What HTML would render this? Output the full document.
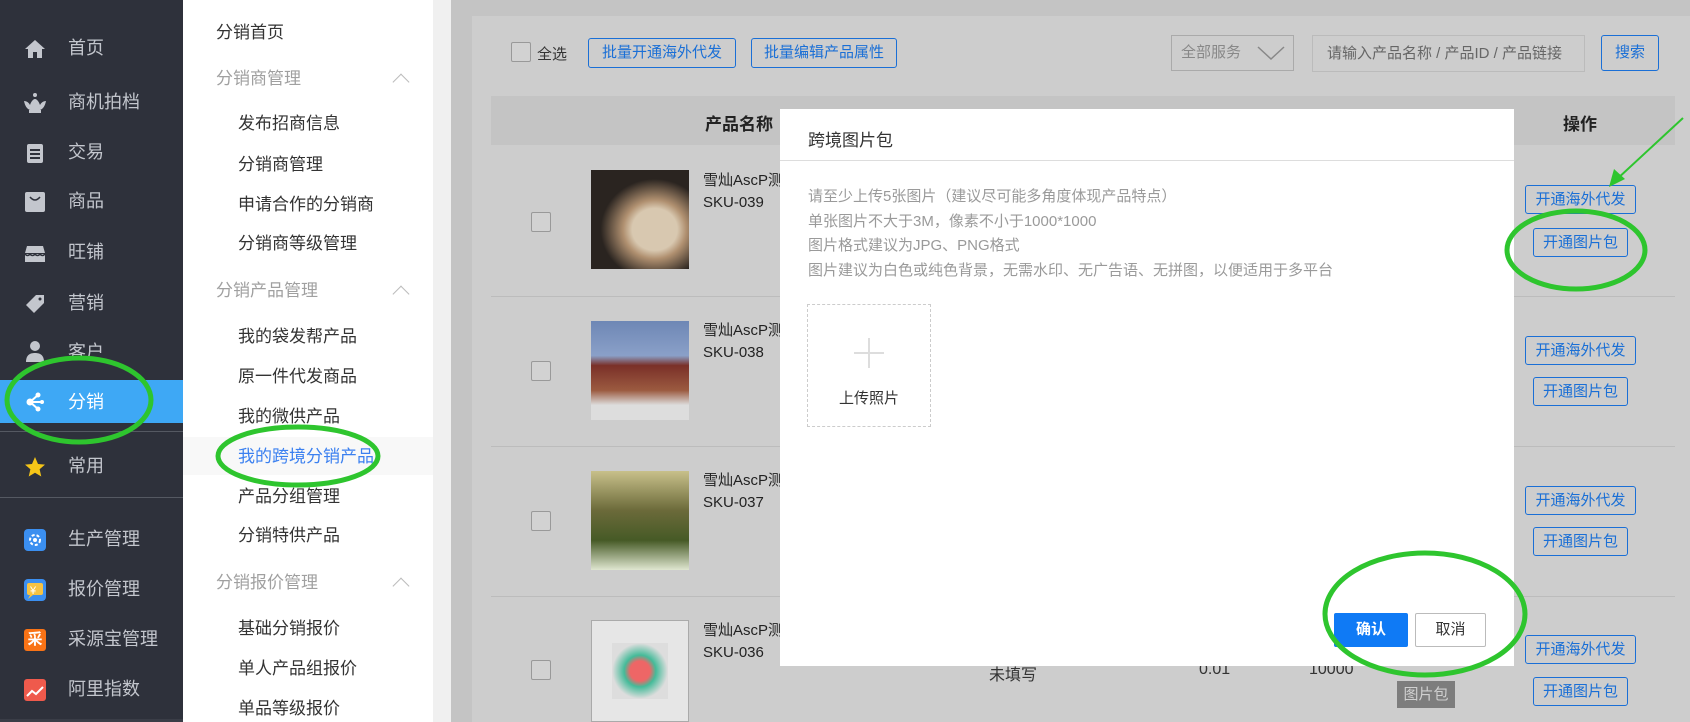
<!DOCTYPE html>
<html><head><meta charset="utf-8"><style>
*{margin:0;padding:0;box-sizing:border-box}
body{width:1690px;height:722px;overflow:hidden;position:relative;background:#c4c4c4;font-family:"Liberation Sans","Noto Sans CJK SC",sans-serif}
.a{position:absolute;white-space:nowrap}
#sb{position:absolute;left:0;top:0;width:183px;height:722px;background:#2e313b}
.si{position:absolute;left:68px;font-size:18px;color:#c3c6cd;line-height:20px}
.ic{position:absolute;left:24px;width:22px;height:22px}
#nav{position:absolute;left:183px;top:0;width:250px;height:722px;background:#fff}
.n{position:absolute;font-size:17px;color:#333;line-height:20px}
.g{color:#a0a0a0;left:33px}
.s{left:55px}
.chev{position:absolute;left:212px;width:12px;height:12px;border-left:1px solid #bbb;border-top:1px solid #bbb;transform:rotate(45deg)}
.bb{position:absolute;border:1px solid #1a6fd6;border-radius:3px;color:#1a6fd6;font-size:15px;text-align:center;background:transparent;white-space:nowrap}
.cb{position:absolute;width:20px;height:20px;border:1px solid #999;border-radius:2px;background:#d2d2d2}
.sep{position:absolute;left:491px;width:1184px;height:1px;background:#bcbcbc}
.img{position:absolute;left:591px;width:98px;height:99px}
.t{position:absolute;left:703px;font-size:15px;color:#222;line-height:22px;width:77px;overflow:hidden;white-space:nowrap}
#m{position:absolute;left:780px;top:109px;width:734px;height:557px;background:#fff}
.ml{position:absolute;left:28px;font-size:15px;color:#9a9a9a;white-space:nowrap}
.b1{width:111px;height:29px;line-height:27px;left:1525px}
.b2{width:95px;height:29px;line-height:27px;left:1533px}
</style></head><body>
<div id="sb">
 <div class="ic" style="top:38px"><svg width="22" height="22"><path d="M11 2L1 11h3v9h5v-6h4v6h5v-9h3z" fill="#c3c6cd"/></svg></div>
 <div class="si" style="top:38px">首页</div>
 <div class="ic" style="top:92px;left:22px"><svg width="26" height="22"><circle cx="13" cy="3" r="2" fill="#c3c6cd"/><path d="M2 9c3 0 5 2 6 4 1-3 3-6 5-6s4 3 5 6c1-2 3-4 6-4-1 5-3 8-6 9H8C5 17 3 14 2 9z" fill="#c3c6cd"/><rect x="7" y="18" width="12" height="3" fill="#c3c6cd"/></svg></div>
 <div class="si" style="top:92px">商机拍档</div>
 <div class="ic" style="top:142px"><svg width="22" height="22"><rect x="3" y="2" width="16" height="19" rx="2" fill="#c3c6cd"/><rect x="6" y="7" width="10" height="2" fill="#2e313b"/><rect x="6" y="11" width="10" height="2" fill="#2e313b"/><rect x="6" y="15" width="10" height="2" fill="#2e313b"/></svg></div>
 <div class="si" style="top:142px">交易</div>
 <div class="ic" style="top:191px"><svg width="22" height="22"><rect x="1" y="1" width="20" height="20" rx="2" fill="#c3c6cd"/><path d="M6 6q5 6 10 0" stroke="#2e313b" stroke-width="1.5" fill="none"/></svg></div>
 <div class="si" style="top:191px">商品</div>
 <div class="ic" style="top:242px"><svg width="22" height="22"><path d="M3 4h16l2 7H1z" fill="#c3c6cd"/><path d="M1 12h20v8H1z" fill="#c3c6cd"/><path d="M1 12q2.5 3 5 0q2.5 3 5 0q2.5 3 5 0q2.5 3 5 0" stroke="#2e313b" stroke-width="1.5" fill="none"/></svg></div>
 <div class="si" style="top:242px">旺铺</div>
 <div class="ic" style="top:293px"><svg width="22" height="22"><path d="M12 2h8v8L10 20 2 12z" fill="#c3c6cd"/><circle cx="16" cy="6" r="1.5" fill="#2e313b"/></svg></div>
 <div class="si" style="top:293px">营销</div>
 <div class="ic" style="top:340px"><svg width="22" height="22"><circle cx="11" cy="6" r="5" fill="#c3c6cd"/><path d="M2 22c0-7 4-9 9-9s9 2 9 9z" fill="#c3c6cd"/></svg></div>
 <div class="si" style="top:342px">客户</div>
 <div style="position:absolute;left:0;top:380px;width:183px;height:43px;background:#3ea8f5"></div>
 <div class="ic" style="top:391px"><svg width="22" height="22"><circle cx="6" cy="11" r="3.5" fill="#fff"/><circle cx="14" cy="4" r="2.5" fill="#fff"/><circle cx="14" cy="18" r="2.5" fill="#fff"/><circle cx="18" cy="11" r="2" fill="#fff"/><path d="M6 11L14 4M6 11L14 18M6 11h12" stroke="#fff" stroke-width="2"/></svg></div>
 <div class="si" style="top:392px;color:#fff">分销</div>
 <div style="position:absolute;left:0;top:431px;width:183px;height:1px;background:#555962"></div>
 <div class="ic" style="top:456px"><svg width="22" height="22"><path d="M11 1l3 7 7 .6-5.4 4.7 1.7 7.2L11 16.7 4.7 20.5l1.7-7.2L1 8.6 8 8z" fill="#f5c518"/></svg></div>
 <div class="si" style="top:456px">常用</div>
 <div style="position:absolute;left:0;top:497px;width:183px;height:1px;background:#555962"></div>
 <div class="ic" style="top:529px;border-radius:4px;background:#3b8ff0"><svg width="22" height="22"><circle cx="11" cy="11" r="5" stroke="#fff" stroke-width="2" fill="none" stroke-dasharray="3 2"/><circle cx="11" cy="11" r="2" fill="#fff"/></svg></div>
 <div class="si" style="top:529px">生产管理</div>
 <div class="ic" style="top:579px;border-radius:4px;background:#3b8ff0"><svg width="22" height="22"><rect x="3" y="4" width="16" height="12" rx="2" fill="#f6c343"/><path d="M6 16l-2 4 5-4z" fill="#f6c343"/><text x="6" y="15" font-size="11" fill="#fff" font-family="Liberation Sans">¥</text></svg></div>
 <div class="si" style="top:579px">报价管理</div>
 <div class="ic" style="top:629px;border-radius:3px;background:#f97316;color:#fff;font-size:15px;text-align:center;line-height:22px;font-weight:bold">采</div>
 <div class="si" style="top:629px">采源宝管理</div>
 <div class="ic" style="top:679px;border-radius:3px;background:#ef5a4c"><svg width="22" height="22"><path d="M3 17l5-5 4 3 7-7" stroke="#fff" stroke-width="2" fill="none"/></svg></div>
 <div class="si" style="top:679px">阿里指数</div>
 <div style="position:absolute;left:0;top:719px;width:183px;height:3px;background:#3a3d47"></div>
</div>
<div id="nav">
 <div class="n" style="left:33px;top:23px">分销首页</div>
 <div class="n g" style="top:69px">分销商管理</div><div class="chev" style="top:76px"></div>
 <div class="n s" style="top:114px">发布招商信息</div>
 <div class="n s" style="top:155px">分销商管理</div>
 <div class="n s" style="top:195px">申请合作的分销商</div>
 <div class="n s" style="top:234px">分销商等级管理</div>
 <div class="n g" style="top:281px">分销产品管理</div><div class="chev" style="top:288px"></div>
 <div class="n s" style="top:327px">我的袋发帮产品</div>
 <div class="n s" style="top:367px">原一件代发商品</div>
 <div class="n s" style="top:407px">我的微供产品</div>
 <div style="position:absolute;left:0;top:437px;width:250px;height:38px;background:#f8f8f8"></div>
 <div class="n s" style="top:447px;color:#3b80f0">我的跨境分销产品</div>
 <div class="n s" style="top:487px">产品分组管理</div>
 <div class="n s" style="top:526px">分销特供产品</div>
 <div class="n g" style="top:573px">分销报价管理</div><div class="chev" style="top:580px"></div>
 <div class="n s" style="top:619px">基础分销报价</div>
 <div class="n s" style="top:659px">单人产品组报价</div>
 <div class="n s" style="top:699px">单品等级报价</div>
</div>
<div style="position:absolute;left:433px;top:0;width:18px;height:722px;background:#f0f0f0"></div>
<div style="position:absolute;left:472px;top:16px;width:1218px;height:706px;background:#cdcdcd"></div>
<div class="cb" style="left:511px;top:42px"></div>
<div class="a" style="left:537px;top:43px;font-size:15px;color:#333">全选</div>
<div class="bb" style="left:588px;top:38px;width:148px;height:30px;line-height:28px">批量开通海外代发</div>
<div class="bb" style="left:751px;top:38px;width:146px;height:30px;line-height:28px">批量编辑产品属性</div>
<div class="a" style="left:1171px;top:35px;width:123px;height:36px;border:1px solid #aaa;font-size:15px;color:#888;line-height:34px;padding-left:9px">全部服务</div>
<svg class="a" style="left:1256px;top:44px" width="30" height="18"><path d="M2 3l13 12L28 3" stroke="#888" stroke-width="1.5" fill="none"/></svg>
<div class="a" style="left:1312px;top:35px;width:273px;height:37px;border:1px solid #bbb;font-size:15px;color:#666;line-height:35px;padding-left:14px">请输入产品名称 / 产品ID / 产品链接</div>
<div class="bb" style="left:1601px;top:35px;width:58px;height:36px;line-height:34px">搜索</div>
<div class="a" style="left:491px;top:96px;width:1184px;height:49px;background:#c4c4c4"></div>
<div class="a" style="left:705px;top:110px;font-size:17px;font-weight:bold;color:#222">产品名称</div>
<div class="a" style="left:1563px;top:110px;font-size:17px;font-weight:bold;color:#222">操作</div>
<div class="sep" style="top:296px"></div>
<div class="sep" style="top:446px"></div>
<div class="sep" style="top:596px"></div>
<div class="cb" style="left:531px;top:212px"></div>
<div class="cb" style="left:531px;top:361px"></div>
<div class="cb" style="left:531px;top:511px"></div>
<div class="cb" style="left:531px;top:660px"></div>
<div class="img" style="top:170px;background:radial-gradient(ellipse at 65% 60%,#d8c8b0 0 25%,#b09070 35%,#2a2420 60%)"></div>
<div class="img" style="top:321px;background:linear-gradient(#6e87b5 0,#8aa0c8 35%,#7a3028 45%,#9b5a40 70%,#ddd 85%)"></div>
<div class="img" style="top:471px;background:linear-gradient(#c8c08a 0,#6b6a3a 40%,#465a26 70%,#dfe6d0 100%)"></div>
<div class="img" style="top:620px;height:102px;background:#e6e6e6;border:1px solid #aaa"><div style="margin:22px 20px;width:56px;height:56px;background:radial-gradient(#e66 0 25%,#4b9 40%,#ddd 70%)"></div></div>
<div class="t" style="top:170px">雪灿AscP测<br>SKU-039</div>
<div class="t" style="top:320px">雪灿AscP测<br>SKU-038</div>
<div class="t" style="top:470px">雪灿AscP测<br>SKU-037</div>
<div class="t" style="top:620px">雪灿AscP测<br>SKU-036</div>
<div class="bb b1" style="top:185px">开通海外代发</div>
<div class="bb b2" style="top:228px">开通图片包</div>
<div class="bb b1" style="top:336px">开通海外代发</div>
<div class="bb b2" style="top:377px">开通图片包</div>
<div class="bb b1" style="top:486px">开通海外代发</div>
<div class="bb b2" style="top:527px">开通图片包</div>
<div class="bb b1" style="top:635px">开通海外代发</div>
<div class="bb b2" style="top:677px">开通图片包</div>
<div class="a" style="left:989px;top:661px;font-size:16px;color:#333">未填写</div>
<div class="a" style="left:1199px;top:661px;font-size:16px;color:#333">0.01</div>
<div class="a" style="left:1309px;top:661px;font-size:16px;color:#333">10000</div>
<div class="a" style="left:1397px;top:681px;width:58px;height:27px;background:#7d7d7d;color:#d0d0d0;font-size:15px;text-align:center;line-height:27px">图片包</div>
<div id="m">
 <div class="a" style="left:28px;top:17px;font-size:17px;color:#333">跨境图片包</div>
 <div style="position:absolute;left:0;top:51px;width:734px;height:1px;background:#ddd"></div>
 <div class="ml" style="top:76px">请至少上传5张图片（建议尽可能多角度体现产品特点）</div>
 <div class="ml" style="top:101px">单张图片不大于3M，像素不小于1000*1000</div>
 <div class="ml" style="top:125px">图片格式建议为JPG、PNG格式</div>
 <div class="ml" style="top:150px">图片建议为白色或纯色背景，无需水印、无广告语、无拼图，以便适用于多平台</div>
 <div style="position:absolute;left:27px;top:195px;width:124px;height:123px;border:1px dashed #ccc"></div>
 <svg class="a" style="left:73px;top:228px" width="32" height="32"><path d="M16 1v30M1 16h30" stroke="#ddd" stroke-width="2"/></svg>
 <div class="a" style="left:59px;top:278px;font-size:15px;color:#333">上传照片</div>
 <div class="a" style="left:554px;top:504px;width:74px;height:34px;background:#0f7af5;color:#fff;font-size:15px;font-weight:bold;text-align:center;line-height:34px;border-radius:2px">确认</div>
 <div class="a" style="left:635px;top:504px;width:71px;height:34px;border:1px solid #bbb;color:#333;font-size:15px;text-align:center;line-height:32px;border-radius:2px">取消</div>
</div>
<svg class="a" style="left:0;top:0" width="1690" height="722">
 <g fill="none" stroke="#2ec52e" stroke-width="5">
  <ellipse cx="79" cy="400" rx="72" ry="42"/>
  <ellipse cx="298" cy="456" rx="80" ry="29"/>
  <ellipse cx="1576" cy="250" rx="69" ry="39"/>
  <ellipse cx="1425" cy="614" rx="100" ry="61"/>
 </g>
 <path d="M1683 118L1616 180" stroke="#2ec52e" stroke-width="2"/>
 <path d="M1609 187l5-18 11 10z" fill="#2ec52e"/>
</svg>
</body></html>
